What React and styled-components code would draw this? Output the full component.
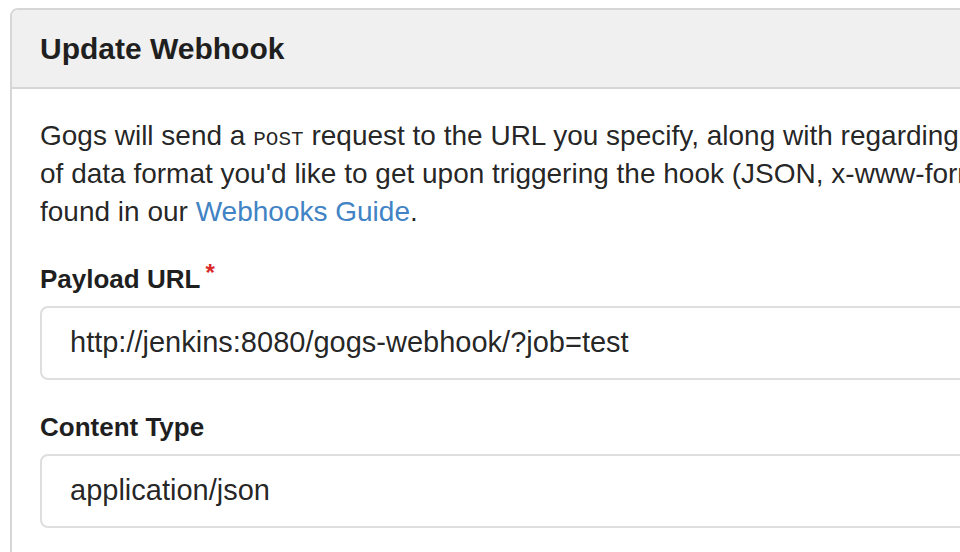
import React from "react";
import styled, { createGlobalStyle } from "styled-components";

const Global = createGlobalStyle`
  html, body {
    margin: 0;
    padding: 0;
    background: #ffffff;
    overflow: hidden;
  }
  body {
    font-family: "Liberation Sans", Arial, Helvetica, sans-serif;
    color: rgba(0, 0, 0, 0.87);
  }
`;

const Page = styled.div`
  padding: 8px 0 0 10px;
  width: 1400px;
`;

const Panel = styled.section`
  width: 1200px;
  border: 2px solid #d6d6d7;
  border-radius: 8px 8px 0 0;
  background: #fff;
`;

const PanelHeader = styled.h2`
  margin: 0;
  height: 77px;
  display: flex;
  align-items: center;
  padding: 0 28px;
  background: #f0f0f0;
  border-bottom: 2px solid #d6d6d7;
  border-radius: 6px 6px 0 0;
  font-size: 30px;
  font-weight: 700;
  color: #1f1f1f;
`;

const PanelBody = styled.div`
  padding: 28px 28px 40px;
`;

const Intro = styled.p`
  margin: 0 0 31.5px;
  font-size: 28px;
  line-height: 38px;
  white-space: nowrap;
`;

const Code = styled.code`
  font-family: "Liberation Mono", "DejaVu Sans Mono", monospace;
  font-size: 21px;
  line-height: 1;
`;

const Link = styled.a`
  color: #4183c4;
  text-decoration: none;
`;

const Field = styled.div`
  margin-bottom: 31px;
`;

const Label = styled.label`
  display: block;
  margin: 0 0 11px;
  font-size: 26px;
  line-height: 32px;
  font-weight: 700;
  color: #1f1f1f;
`;

const Required = styled.span`
  display: inline-block;
  margin: -6px 0 0 5px;
  vertical-align: top;
  line-height: 32px;
  color: #db2828;
  font-size: 24px;
  font-weight: 700;
`;

const Input = styled.input`
  display: block;
  box-sizing: border-box;
  width: 1200px;
  height: 74px;
  margin: 0;
  padding: 0 28px;
  border: 2px solid #dededf;
  border-radius: 8px;
  background: #fff;
  font-family: "Liberation Sans", Arial, Helvetica, sans-serif;
  font-size: 29px;
  color: rgba(0, 0, 0, 0.87);
  outline: none;
`;

export default function App() {
  return (
    <Page>
      <Global />
      <Panel>
        <PanelHeader>Update Webhook</PanelHeader>
        <PanelBody>
          <Intro>
            Gogs will send a <Code>POST</Code> request to the URL you specify, along with regarding the event that occurred. You can also specify what kind
            <br />
            of data format you'd like to get upon triggering the hook (JSON, x-www-form-urlencoded, XML, etc). More information can be
            <br />
            found in our <Link href="#">Webhooks Guide</Link>.
          </Intro>
          <Field>
            <Label>
              Payload URL<Required>*</Required>
            </Label>
            <Input readOnly value="http://jenkins:8080/gogs-webhook/?job=test" />
          </Field>
          <Field>
            <Label>Content Type</Label>
            <Input readOnly value="application/json" />
          </Field>
        </PanelBody>
      </Panel>
    </Page>
  );
}
